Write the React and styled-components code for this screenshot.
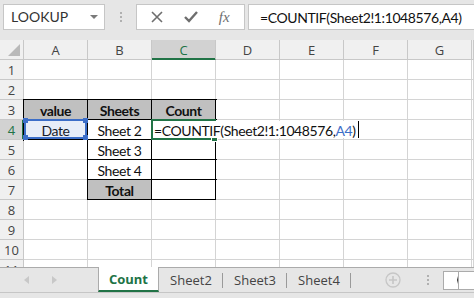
import styled, { createGlobalStyle } from "styled-components";

const GlobalStyle = createGlobalStyle`
  body {
    margin: 0;
    background: #e6e6e6;
    font-family: Lato, "Liberation Sans", sans-serif;
  }
`;

const GREEN = "#217346";
const GRID = "#d4d4d4";

const Window = styled.div`
  width: 474px;
  height: 298px;
  overflow: hidden;
  display: flex;
  flex-direction: column;
  background: #e6e6e6;
`;

const FormulaBar = styled.div`
  height: 40px;
  flex-shrink: 0;
  box-sizing: border-box;
  padding: 4px 0 0 3px;
  display: flex;
  align-items: flex-start;
  & > * {
    flex-shrink: 0;
  }
`;

const NameBox = styled.div`
  position: relative;
  width: 102px;
  height: 26px;
  box-sizing: border-box;
  border: 1px solid #c6c6c6;
  background: #fff;
  padding-left: 7px;
  font-size: 14px;
  line-height: 24px;
  color: #333;
  &::after {
    content: "";
    position: absolute;
    right: 6px;
    top: 10px;
    border-left: 4px solid transparent;
    border-right: 4px solid transparent;
    border-top: 4px solid #7a7a7a;
  }
`;

const Grip = styled.div`
  width: 31px;
  height: 26px;
  display: flex;
  flex-direction: column;
  align-items: center;
  justify-content: center;
  gap: 2px;
  span {
    width: 2px;
    height: 2px;
    background: #b0b0b0;
  }
`;

const FuncBox = styled.div`
  width: 109px;
  height: 26px;
  box-sizing: border-box;
  border: 1px solid #c6c6c6;
  background: #fff;
  display: flex;
  align-items: center;
  justify-content: space-around;
  padding: 0 4px;
  color: #6e6e6e;
`;

const Fx = styled.span`
  font-family: "Liberation Serif", serif;
  font-style: italic;
  font-size: 15px;
  color: #6e6e6e;
`;

const FormulaInput = styled.div`
  flex: 1 1 auto;
  min-width: 0;
  overflow: hidden;
  margin-left: 3px;
  height: 26px;
  box-sizing: border-box;
  border: 1px solid #c6c6c6;
  border-right: none;
  background: #fff;
  padding-left: 11px;
  font-size: 14px;
  letter-spacing: -0.4px;
  line-height: 25px;
  color: #111;
  white-space: nowrap;
`;

const Sheet = styled.div`
  height: 227px;
  flex-shrink: 0;
  overflow: hidden;
  display: grid;
  grid-template-columns: 24px repeat(7, 64px) 1fr;
  grid-auto-rows: 20px;
  background: #fff;
`;

const Head = styled.div`
  box-sizing: border-box;
  background: ${(p) => (p.$active ? "#d2d2d2" : "#f0f0f0")};
  border-right: 1px solid ${(p) => (p.$activeRow ? GREEN : "#c8c8c8")};
  border-bottom: 1px solid ${(p) => (p.$active && !p.$activeRow ? GREEN : "#c8c8c8")};
  box-shadow: ${(p) =>
    p.$active && !p.$activeRow ? `inset 0 -1px 0 ${GREEN}` : p.$activeRow ? `inset -1px 0 0 ${GREEN}` : "none"};
  color: ${(p) => (p.$active ? GREEN : "#444")};
  font-family: "Open Sans", sans-serif;
  font-size: 13px;
  line-height: 20px;
  text-align: center;
`;

const Corner = styled(Head)`
  position: relative;
  &::after {
    content: "";
    position: absolute;
    right: 3px;
    bottom: 3px;
    border-left: 12px solid transparent;
    border-bottom: 12px solid #b9b9b9;
  }
`;

const Cell = styled.div`
  position: relative;
  box-sizing: border-box;
  background: ${(p) => p.$fill || "#fff"};
  border-right: 1px solid ${(p) => (p.$boxed ? "#000" : GRID)};
  border-bottom: 1px solid ${(p) => (p.$boxed ? "#000" : GRID)};
  box-shadow: ${(p) => (p.$boxed ? "0 0 0 1px #000" : "none")};
  font-size: 14px;
  letter-spacing: -0.4px;
  font-weight: ${(p) => (p.$bold ? 700 : 400)};
  line-height: 21px;
  text-align: center;
  color: #111;
  white-space: nowrap;
`;

const RangeMark = styled.div`
  position: absolute;
  top: -1px;
  left: 0;
  right: 0;
  bottom: 0;
  border: 2px solid #3c6ec8;
  background: rgba(60, 110, 200, 0.12);
  z-index: 1;
  i {
    position: absolute;
    width: 5px;
    height: 5px;
    background: #3c6ec8;
  }
`;

const ActiveMark = styled.div`
  position: absolute;
  top: -1px;
  left: -1px;
  right: -1px;
  bottom: -1px;
  border: 2px solid ${GREEN};
  z-index: 1;
  &::after {
    content: "";
    position: absolute;
    right: -4px;
    bottom: -4px;
    width: 5px;
    height: 5px;
    background: ${GREEN};
    border: 1px solid #fff;
  }
`;

const EditText = styled.div`
  position: absolute;
  z-index: 2;
  left: 1px;
  top: 1px;
  height: 17px;
  padding: 0 2px 0 1px;
  background: #fff;
  text-align: left;
  line-height: 19px;
  border-right: 1px solid #000;
  b {
    font-weight: 400;
    color: #3c6ec8;
  }
`;

const TabBar = styled.div`
  height: 25px;
  flex-shrink: 0;
  display: flex;
  align-items: stretch;
  border-bottom: 1px solid #c6c6c6;
`;

const TabNav = styled.div`
  width: 98px;
  border-top: 1px solid #ababab;
  display: flex;
  align-items: center;
  padding-left: 24px;
  gap: 23px;
  box-sizing: border-box;
`;

const Arrow = styled.span`
  width: 0;
  height: 0;
  border-top: 4px solid transparent;
  border-bottom: 4px solid transparent;
  ${(p) => (p.$left ? "border-right: 5px solid #c8c8c8;" : "border-left: 5px solid #c8c8c8;")}
`;

const Tab = styled.div`
  width: ${(p) => (p.$active ? "61px" : "64px")};
  box-sizing: border-box;
  display: flex;
  align-items: center;
  justify-content: center;
  font-family: "Open Sans", sans-serif;
  font-size: 13px;
  color: ${(p) => (p.$active ? GREEN : "#444")};
  font-weight: ${(p) => (p.$active ? 700 : 400)};
  background: ${(p) => (p.$active ? "#fff" : "transparent")};
  border-top: ${(p) => (p.$active ? "none" : "1px solid #ababab")};
  border-bottom: ${(p) => (p.$active ? `2px solid ${GREEN}` : "none")};
  border-left: ${(p) => (p.$active ? "1px solid #ababab" : "none")};
  border-right: ${(p) => (p.$active ? "1px solid #ababab" : "none")};
  position: relative;
  ${(p) =>
    p.$sep &&
    `&::after {
      content: "";
      position: absolute;
      right: 0;
      top: 5px;
      height: 15px;
      width: 1px;
      background: #9a9a9a;
    }`}
`;

const TabTools = styled.div`
  flex: 1;
  border-top: 1px solid #ababab;
  display: flex;
  align-items: center;
  padding-left: 34px;
`;

const ToolGrip = styled(Grip)`
  width: 14px;
  margin-left: 20px;
`;

const Scroll = styled.div`
  margin-left: 8px;
  height: 17px;
  flex: 1;
  border: 1px solid #ababab;
  border-right: none;
  background: #fff;
  display: flex;
  span {
    width: 14px;
    border-right: 1px solid #ababab;
    display: flex;
    align-items: center;
    justify-content: center;
  }
`;

const Strip = styled.div`
  flex: 1;
`;

const cols = ["A", "B", "C", "D", "E", "F", "G", ""];

const rows = [
  [],
  [],
  [
    { t: "value", bold: true, fill: "#c0c0c0", boxed: true },
    { t: "Sheets", bold: true, fill: "#c0c0c0", boxed: true },
    { t: "Count", bold: true, fill: "#c0c0c0", boxed: true },
  ],
  [
    { t: "Date", boxed: true, range: true },
    { t: "Sheet 2", boxed: true },
    { active: true, boxed: true },
  ],
  [{}, { t: "Sheet 3", boxed: true }, { boxed: true }],
  [{}, { t: "Sheet 4", boxed: true }, { boxed: true }],
  [{}, { t: "Total", bold: true, fill: "#c0c0c0", boxed: true }, { boxed: true }],
  [],
  [],
  [],
  [],
];

const XIcon = () => (
  <svg width="12" height="12" viewBox="0 0 12 12">
    <path d="M1 1 L11 11 M11 1 L1 11" stroke="#6e6e6e" strokeWidth="1.6" />
  </svg>
);

const CheckIcon = () => (
  <svg width="14" height="12" viewBox="0 0 14 12">
    <path d="M1 6 L5 10 L13 1" stroke="#6e6e6e" strokeWidth="2.4" fill="none" />
  </svg>
);

const PlusIcon = () => (
  <svg width="16" height="16" viewBox="0 0 16 16">
    <circle cx="8" cy="8" r="7" stroke="#c6c6c6" strokeWidth="1.3" fill="none" />
    <path d="M8 4 V12 M4 8 H12" stroke="#c6c6c6" strokeWidth="1.6" />
  </svg>
);

export default function App() {
  return (
    <Window>
      <GlobalStyle />
      <FormulaBar>
        <NameBox>LOOKUP</NameBox>
        <Grip>
          <span />
          <span />
          <span />
        </Grip>
        <FuncBox>
          <XIcon />
          <CheckIcon />
          <Fx>fx</Fx>
        </FuncBox>
        <FormulaInput>=COUNTIF(Sheet2!1:1048576,A4)</FormulaInput>
      </FormulaBar>

      <Sheet>
        <Corner />
        {cols.map((c) => (
          <Head key={c || "h"} $active={c === "C"}>
            {c}
          </Head>
        ))}
        {rows.map((row, r) => (
          <>
            <Head key={"r" + r} $active={r === 3} $activeRow={r === 3}>
              {r + 1}
            </Head>
            {cols.map((c, i) => {
              const cell = row[i] || {};
              return (
                <Cell
                  key={c + r}
                  $bold={cell.bold}
                  $fill={cell.fill}
                  $boxed={cell.boxed}
                >
                  {cell.t}
                  {cell.range && (
                    <RangeMark>
                      <i style={{ left: -3, top: -3 }} />
                      <i style={{ right: -3, top: -3 }} />
                      <i style={{ left: -3, bottom: -3 }} />
                      <i style={{ right: -3, bottom: -3 }} />
                    </RangeMark>
                  )}
                  {cell.active && (
                    <>
                      <ActiveMark />
                      <EditText>
                        =COUNTIF(Sheet2!1:1048576,<b>A4</b>)
                      </EditText>
                    </>
                  )}
                </Cell>
              );
            })}
          </>
        ))}
      </Sheet>

      <TabBar>
        <TabNav>
          <Arrow $left />
          <Arrow />
        </TabNav>
        <Tab $active>Count</Tab>
        <Tab $sep>Sheet2</Tab>
        <Tab $sep>Sheet3</Tab>
        <Tab $sep>Sheet4</Tab>
        <TabTools>
          <PlusIcon />
          <ToolGrip>
            <span />
            <span />
            <span />
          </ToolGrip>
          <Scroll>
            <span>
              <Arrow $left style={{ borderRightColor: "#333" }} />
            </span>
          </Scroll>
        </TabTools>
      </TabBar>
      <Strip />
    </Window>
  );
}
